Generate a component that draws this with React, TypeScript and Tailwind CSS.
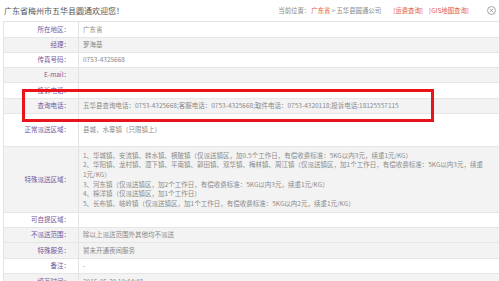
import React from "react";

const font = { fontFamily: '"Noto Sans CJK SC", "Liberation Sans", sans-serif' };

type Row = { label: string; value: React.ReactNode; h: string; gray?: boolean };

const special = [
  "1、华城镇、安流镇、转水镇、横陂镇（仅派送镇区，加0.5个工作日，有偿收费标准：5KG以内3元，续重1元/KG）",
  "2、华阳镇、龙村镇、潭下镇、平南镇、郭田镇、双华镇、梅林镇、周江镇（仅派送镇区，加1个工作日，有偿收费标准：5KG以内3元，续重",
  "1元/KG）",
  "3、河东镇（仅派送镇区，加2个工作日，有偿收费标准：5KG以内3元，续重1元/KG）",
  "4、棉洋镇（仅派送镇区，加1个工作日）",
  "5、长布镇、岐岭镇（仅派送镇区，加1个工作日，有偿收费标准：5KG以内2元，续重1元/KG）",
];

const rows: Row[] = [
  { label: "所在地区：", value: "广东省", h: "h-[16px]" },
  { label: "经理：", value: "罗海基", h: "h-[15px]", gray: true },
  { label: "传真号码：", value: "0753-4325668", h: "h-[15px]" },
  { label: "E-mail：", value: "", h: "h-[15px]", gray: true },
  { label: "投诉电话：", value: "", h: "h-[16px]" },
  {
    label: "查询电话：",
    value: "五华县查询电话：0753-4325668;客服电话：0753-4325668;取件电话：0753-4320118;投诉电话:18125557115",
    h: "h-[15px]",
    gray: true,
  },
  { label: "正常派送区域：", value: "县城，水寨镇（只限镇上）", h: "h-[33px]" },
  {
    label: "特殊派送区域：",
    value: (
      <div className="flex flex-col leading-[9.6px]">
        {special.map((s) => (
          <span key={s} className="whitespace-nowrap">
            {s}
          </span>
        ))}
      </div>
    ),
    h: "h-[66px]",
    gray: true,
  },
  { label: "可自提区域：", value: "", h: "h-[15px]" },
  { label: "不派送范围：", value: "除以上派送范围外其他均不派送", h: "h-[15px]", gray: true },
  { label: "特殊服务：", value: "暂未开通夜间服务", h: "h-[16px]", gray: true },
  { label: "备注：", value: "-", h: "h-[15px]" },
  { label: "填写时间：", value: "2015-05-20 10:44:48", h: "h-[16px]", gray: true },
];

export default function App() {
  return (
    <div className="w-[499px] h-[281px] overflow-hidden bg-white relative" style={font}>
      <div className="flex items-center h-[21px] pl-[4px] pr-[3px]">
        <span className="text-[8px] text-[#555] whitespace-nowrap">广东省梅州市五华县圆通欢迎您！</span>
        <div className="ml-auto flex items-center text-[6.4px] text-[#888] whitespace-nowrap">
          <span>当前位置：</span>
          <span className="text-[#e2563b] ml-[1px]">广东省</span>
          <span className="ml-[1px]">&gt; 五华县圆通公司</span>
          <span className="text-[#e2563b] ml-[12px]">[运费查询]</span>
          <span className="text-[#e2563b] ml-[6px]">[GIS地图查询]</span>
          <svg viewBox="0 0 12 12" className="w-[9px] h-[9px] ml-[18px]" fill="none" stroke="#888" strokeWidth="1">
            <circle cx="6" cy="6" r="5.3" />
            <path d="M3.8 3.8l4.4 4.4M8.2 3.8l-4.4 4.4" />
          </svg>
        </div>
      </div>

      <div className="ml-[3px] border-t border-l border-[#e3e3e3] text-[6.5px]">
        {rows.map((r) => (
          <div
            key={r.label}
            className={`flex border-b border-[#e6e6e6] ${r.h} ${r.gray ? "bg-[#f3f3f3]" : "bg-white"}`}
          >
            <div className="w-[75px] shrink-0 flex items-center justify-end pr-[8px] border-r border-[#e3e3e3] text-[#74579a] whitespace-nowrap">
              {r.label}
            </div>
            <div className="flex-1 flex items-center pl-[4px] text-[#8a8a8a] whitespace-nowrap">{r.value}</div>
          </div>
        ))}
      </div>

      <div className="absolute left-[22px] top-[89px] w-[412px] h-[33px] border-[3px] border-[#e8131b] pointer-events-none" />
    </div>
  );
}
